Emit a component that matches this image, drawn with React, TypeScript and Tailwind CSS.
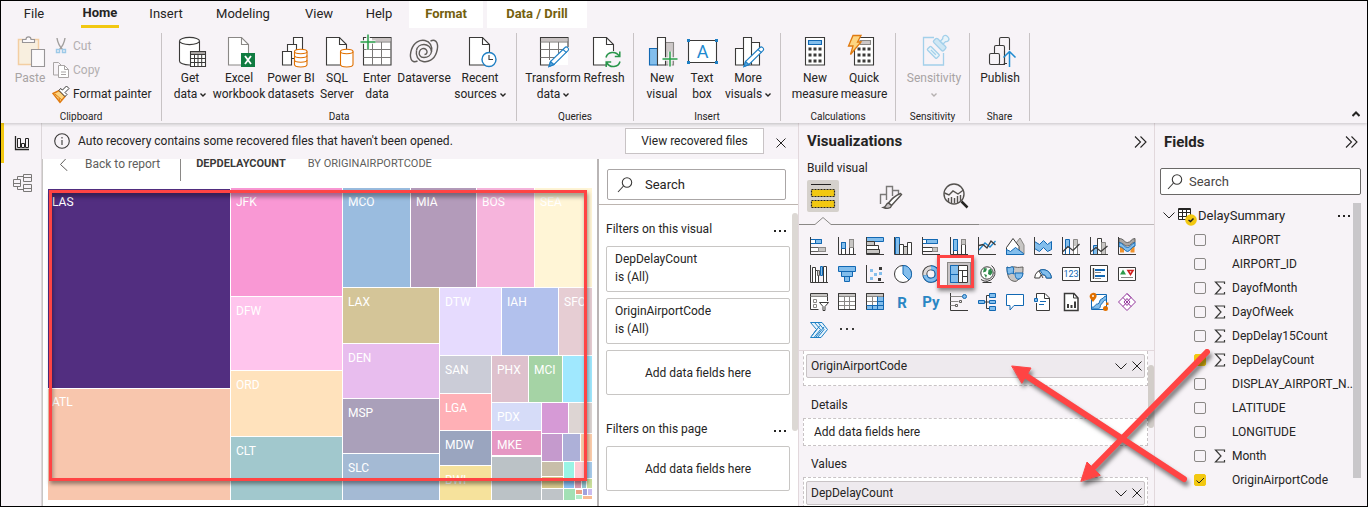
import React from "react";

type Kids = { children?: React.ReactNode };

const INK = "#3b3a39";
const BLUE = "#1268b3";
const SKY = "#83beec";
const GRAY = "#c8c6c4";

/* ---------- icon frames ---------- */

function Big({ children }: Kids) {
  return (
    <svg viewBox="0 0 32 32" className="h-8 w-8 shrink-0 overflow-visible" fill="none" stroke={INK} strokeWidth="1.1" aria-hidden="true">
      {children}
    </svg>
  );
}

function Small({ children }: Kids) {
  return (
    <svg viewBox="0 0 18 18" className="h-[18px] w-[18px] overflow-visible" fill="none" stroke={INK} strokeWidth="1" aria-hidden="true">
      {children}
    </svg>
  );
}

const Axis = () => <path d="M.5 0v17.500H18" />;

const Doc = ({ stroke = INK }: { stroke?: string }) => (
  <g stroke={stroke}>
    <path d="M5.500 2.500h13l7 7v20.500h-20z" fill="#fff" />
    <path d="M18.500 2.500v7h7" />
  </g>
);

const Cylinder = ({ rings = false }: { rings?: boolean }) => (
  <g stroke="#e07000">
    <path d="M19.500 16.500v13c0 1.500 3 2.500 6.200 2.500s6.300-1 6.300-2.500v-13" fill="#fff" />
    <ellipse cx="25.750" cy="16.500" rx="6.250" ry="2.200" fill="#fff" />
    {rings && <path d="M19.500 20.500c0 3 12.500 3 12.500 0M19.500 25c0 3 12.500 3 12.500 0" />}
  </g>
);

const Pencil = () => (
  <g stroke="#1e7fc4">
    <path d="M28 12.500c1.500-1.600 4.600 1 3.200 2.800L17 29.500 12 31.500 13.500 26.500z" fill="#fff" />
    <path d="M13.500 26.500 12 31.500 17 29.500z" fill="#5aa5dc" />
    <path d="M26 14.500l3.500 3.200" />
  </g>
);

const Plus = ({ x, y }: { x: number; y: number }) => (
  <g transform={`translate(${x} ${y})`}>
    <path d="M-7.500 0h15M0-7.500v15" stroke="#f7f3f7" strokeWidth="3.500" />
    <path d="M-7.500 0h15M0-7.500v15" stroke="#28a04a" strokeWidth="1.500" />
  </g>
);

/* ---------- ribbon icons ---------- */

const PasteIcon = () => (
  <Big>
    <g opacity=".5">
      <path d="M4.500 4.500h20v25h-20z" fill="#faecc9" stroke="#f0aa50" strokeWidth="1.500" />
      <path d="M8.500 7.500v-3h3.500c0-3.500 5-3.500 5 0h3.500v3z" fill="#fff" />
      <path d="M17.500 14.500h13v17h-13z" fill="#fff" />
    </g>
  </Big>
);
const GetDataIcon = () => (
  <Big>
    <path d="M5.500 6v20c0 2.300 4.500 4 10 4s10-1.700 10-4V6" fill="#fff" />
    <ellipse cx="15.500" cy="6" rx="10" ry="3.600" fill="#fff" />
    <path d="M16.500 16.500h15v15h-15z" fill="#fff" />
    <path d="M17 17h14v2H17z" fill="#a9a5a3" stroke="none" />
    <path d="M16.500 19.500h15M16.500 23.500h15M16.500 27.500h15M20.500 19.500v12M24 19.500v12M27.700 19.500v12" strokeWidth="1" />
  </Big>
);
const ExcelIcon = () => (
  <Big>
    <Doc stroke="#8a8886" />
    <path d="M18 18h14v14H18z" fill="#107c41" stroke="none" />
    <path d="M22 21l6 8M28 21l-6 8" stroke="#fff" strokeWidth="1.800" />
  </Big>
);
const DatasetsIcon = () => (
  <Big>
    <path d="M18.500 2.500h9v14h-9z" fill="#fff" />
    <path d="M12.500 9.500h9v14h-9z" fill="#fff" />
    <path d="M7.500 16.500h9v13.500h-9z" fill="#fff" />
    <Cylinder rings />
  </Big>
);
const SqlIcon = () => (
  <Big>
    <Doc />
    <Cylinder />
  </Big>
);
const EnterDataIcon = () => (
  <Big>
    <path d="M2.500 2.500h27.500v27.500H2.500z" fill="#fff" />
    <path d="M11 3h18.500v3.500H11z" fill="#c8c2c2" stroke="none" />
    <path d="M2.500 14.500h27.500M2.500 22.500h27.500M11.500 7v23M20.500 7v23M11 7h19" stroke="#7a7877" strokeWidth="1" />
    <Plus x={7} y={7} />
  </Big>
);
const DataverseIcon = () => (
  <Big>
    <g stroke="#605d5a" strokeWidth="1.400">
      <path d="M9.500 26C3 29 1 22 3.500 14.500 6 7 12 4.500 17 5.500c5 1 7.500 5.500 6.500 11" />
      <path d="M22.500 6C29 3 31 10 28.500 17.500 26 25 20 27.500 15 26.500c-5-1-7.500-5.500-6.500-11" />
      <path d="M8.500 15.500c.5-4 4-6 7.500-6s7 2.500 7.500 7c-.5 4-4 6-7.500 6-4 0-5.500-3-4.500-6s4.500-4 6.500-2 1 5-1.500 5" />
    </g>
  </Big>
);
const RecentIcon = () => (
  <Big>
    <Doc />
    <circle cx="25" cy="24.500" r="7" fill="#fff" stroke="#1e7fc4" strokeWidth="1.400" />
    <path d="M25 20v4.500h4" />
  </Big>
);
const TransformIcon = () => (
  <Big>
    <path d="M3.500 2.500h27.500v27.500H3.500z" fill="#fff" stroke="none" />
    <path d="M31 12V2.500H3.500v27.500H12" />
    <path d="M4 3h26.500v3.500H4z" fill="#c8c2c2" stroke="none" />
    <path d="M3.500 7h27.500M3.500 14.500H26M3.500 22.500H18M12.500 7v18M21.500 7v12" stroke="#7a7877" strokeWidth="1" />
    <Pencil />
  </Big>
);
const RefreshIcon = () => (
  <Big>
    <Doc />
    <circle cx="25" cy="24.500" r="8.500" fill="#f7f3f7" stroke="none" />
    <path d="M18 22.500c1.500-6 10-7 13.500-1M31.800 16.500v5h-5M32 26.500c-1.500 6-10 7-13.500 1M18.200 32v-5h5" stroke="#28964a" strokeWidth="1.500" />
  </Big>
);
const NewVisualIcon = () => (
  <Big>
    <path d="M3.500 13.500h8v16.500h-8z" fill={SKY} stroke={BLUE} />
    <path d="M19.500 7.500h8v22.500h-8z" fill="#cdc8c8" stroke="#8a8886" />
    <path d="M11.500 2.500h8v27.500h-8z" fill="#fff" />
    <Plus x={24} y={24} />
  </Big>
);
const TextBoxIcon = () => (
  <Big>
    <path d="M2.500 5.500h28v22h-28z" fill="#fff" />
    <path d="M1 4h3v3H1zM29 4h3v3h-3zM1 26h3v3H1zM29 26h3v3h-3z" fill="#1e7fc4" stroke="none" />
    <text x="16.500" y="23" textAnchor="middle" fontSize="18" fill="#1e8ad0" stroke="none">A</text>
  </Big>
);
const MoreVisualsIcon = () => (
  <Big>
    <path d="M3.500 13.500h8v16.500h-8zM19.500 7.500h8v22.500h-8zM11.500 2.500h8v27.500h-8z" fill="#fff" />
    <Pencil />
  </Big>
);
const Keys = () => (
  <path d="M9.500 12.500h3v3h-3zM14.500 12.500h3v3h-3zM19.500 12.500h3v3h-3zM9.500 18.500h3v3h-3zM14.500 18.500h3v3h-3zM19.500 18.500h3v3h-3zM9.500 24.500h3v3h-3zM14.500 24.500h3v3h-3zM19.500 24.500h3v3h-3z" fill={INK} stroke="none" />
);
const MeasureIcon = () => (
  <Big>
    <path d="M6.500 2.500h19v27.500h-19z" fill="#fff" />
    <path d="M9.500 5.500h13v4h-13z" fill={SKY} stroke={BLUE} />
    <Keys />
  </Big>
);
const QuickIcon = () => (
  <Big>
    <path d="M6.500 2.500h19v27.500h-19z" fill="#fff" />
    <path d="M12 5.500h10.500v4H12z" fill="#cdc8c8" stroke="#8a8886" />
    <Keys />
    <path d="M5 .5h8L9.500 7H13L2.500 19.500 5 11H.5z" fill="#fcd582" stroke="#e07a10" strokeWidth="1.300" />
  </Big>
);
const SensitivityIcon = () => (
  <Big>
    <g stroke="#a3d0ea" strokeWidth="1.300">
      <path d="M16 2.500H5.500v27.500h20V18" />
      <g transform="rotate(45 15 17)">
        <rect x="9" y="14.500" width="13" height="5" rx="1" fill="#e8f4fa" />
        <path d="M12 17h7" />
      </g>
      <g transform="rotate(45 24 8)">
        <rect x="16.500" y="8" width="14" height="5.500" rx="1.500" fill="#cfe7f4" />
        <path d="M21.500 8V4.500c-2-1.500-2-5 2-5s4 3.500 2 5V8z" fill="#e8f4fa" />
      </g>
    </g>
  </Big>
);
const PublishIcon = () => (
  <Big>
    <rect x="15.500" y="2.500" width="10" height="26" rx="1.500" fill="#f7f3f7" />
    <rect x="10.500" y="10.500" width="10" height="19" rx="1.500" fill="#f7f3f7" />
    <rect x="5.500" y="18.500" width="10" height="11" rx="1.500" fill="#f7f3f7" />
    <path d="M20.500 16v13.500h-5" />
    <path d="M25.500 15v17" stroke="#f7f3f7" strokeWidth="5" />
    <path d="M25.500 32V17M19.500 22.500l6-6 6 6" stroke="#1e8ad0" strokeWidth="1.500" />
  </Big>
);

const CutIcon = () => (
  <Small>
    <path d="M5 1c.5 4 2 8 6 12M13 1c-.5 4-2 8-6 12" stroke="#a19f9d" strokeWidth="1.400" />
    <path d="M4.500 12.500h3v3h-3zM10.500 12.500h3v3h-3z" stroke="#9cc9e8" strokeWidth="1.400" />
  </Small>
);
const CopyIcon = () => (
  <Small>
    <g stroke="#a9a5a5">
      <path d="M6 14H1.500V1.500h5L9 4" />
      <path d="M6.500 4.500h6l4 4v8h-10z" fill="#fff" />
      <path d="M12.500 4.500v4h4M9 11h5M9 13.500h5" />
    </g>
  </Small>
);
const PainterIcon = () => (
  <Small>
    <path d="M1 8.500l6-3 6 6-5 6z" fill="#fcd582" stroke="#e07a10" strokeWidth="1.400" />
    <path d="M3 9l7 6M8 17l-1-4" stroke="#e07a10" />
    <path d="M7 5.500l6 6 2-2-2-2 4-4-2.500-2.500-4 4-2-1.500z" fill="#fff" />
  </Small>
);

/* ---------- visual gallery icons ---------- */

const gallery: { name: string; icon: React.ReactNode }[] = [
  { name: "Stacked bar chart", icon: <><path d="M.5 2.500h11v4H.5z" fill="#fff" stroke={BLUE} /><path d="M5.500 2.500h6v4h-6z" fill={SKY} stroke={BLUE} /><path d="M.5 10.500h15v4H.5z" fill="#fff" stroke="#605e5c" /><path d="M8.500 10.500h7v4h-7z" fill={GRAY} stroke="#8a8886" /><Axis /></> },
  { name: "Stacked column chart", icon: <><path d="M3.500 5.500h4v12h-4z" fill="#fff" /><path d="M3.500 5.500h4v6h-4z" fill={SKY} stroke={BLUE} /><path d="M11.500 2.500h4v15h-4z" fill="#fff" /><path d="M11.500 2.500h4v8h-4z" fill={GRAY} stroke="#8a8886" /><Axis /></> },
  { name: "Clustered bar chart", icon: <><path d="M.5.500h17v4H.5z" fill={SKY} stroke={BLUE} /><path d="M.5 4.500h8v4h-8z" fill={GRAY} /><path d="M.5 8.500h12v4H.5z" fill="#fff" /><path d="M.5 12.500h13v4H.5z" fill={GRAY} /><Axis /></> },
  { name: "Clustered column chart", icon: <><path d="M1.500.500h4v17h-4z" fill={SKY} stroke={BLUE} /><path d="M5.500 7.500h4v10h-4z" fill="#fff" /><path d="M9.500 9.500h4v8h-4z" fill={GRAY} /><path d="M13.500 5.500h4v12h-4z" fill="#fff" /><Axis /></> },
  { name: "100% stacked bar chart", icon: <><path d="M.5 2.500h15v4H.5z" fill="#fff" stroke={BLUE} /><path d="M4.500 2.500h11v4h-11z" fill={SKY} stroke={BLUE} /><path d="M.5 10.500h15v4H.5z" fill="#fff" /><path d="M10.500 10.500h5v4h-5z" fill={GRAY} stroke="#8a8886" /><Axis /></> },
  { name: "100% stacked column chart", icon: <><path d="M3.500 2.500h4v15h-4z" fill="#fff" /><path d="M3.500 2.500h4v11h-4z" fill={SKY} stroke={BLUE} /><path d="M11.500 2.500h4v15h-4z" fill="#fff" /><path d="M11.500 2.500h4v5h-4z" fill={GRAY} stroke="#8a8886" /><Axis /></> },
  { name: "Line chart", icon: <><path d="M1 13l6-7 5 4 5.500-6" stroke="#1e8ad0" strokeWidth="1.300" /><path d="M1 8.500l4-1 4 3.500 4-7 4.500 4" strokeWidth="1.300" /><Axis /></> },
  { name: "Area chart", icon: <><path d="M8.500 8L14 1l4 7v9.500H8.500z" fill={GRAY} stroke="#8a8886" /><path d="M.5 10.500L7 1.500l6 8v8H.5z" fill="#fff" /><path d="M.5 17.500v-5l4 2 5-4 8 6v1z" fill={SKY} stroke={BLUE} /></> },
  { name: "Stacked area chart", icon: <><path d="M.5 4.500l5 3 4-4 4 4 4-3v8l-4 2-4-4-4 4-5-3z" fill={SKY} stroke={BLUE} /><Axis /></> },
  { name: "Line and stacked column chart", icon: <><path d="M3.500 2.500h4v15h-4z" fill={SKY} stroke={BLUE} /><path d="M11.500 2.500h4v15h-4z" fill={GRAY} stroke="#8a8886" /><path d="M4 11h3v6H4zM12 9h3v8h-3z" fill="#fff" stroke="none" /><path d="M1 14.500l5-5 5 4 6.500-6.500" strokeWidth="1.300" /><Axis /></> },
  { name: "Line and clustered column chart", icon: <><path d="M3.500 8.500h4v9h-4z" fill={SKY} stroke={BLUE} /><path d="M7.500 1.500h4v16h-4z" fill="#fff" /><path d="M11.500 5.500h4v12h-4z" fill={GRAY} stroke="#8a8886" /><path d="M1 14.500l5-4 5 4 6.500-5.500" strokeWidth="1.300" /><Axis /></> },
  { name: "Ribbon chart", icon: <><path d="M1 1.500c5 0 5 4 8.500 4S13 1.500 17 1.500v4c-4 0-4 3.500-7.500 3.500S6 6 1 6z" fill="#aaa7a5" stroke="#605e5c" /><path d="M2 8.500h4v7H2zM12.500 8.500h4v7h-4z" fill="#f0922c" stroke="none" /><path d="M1 5.500c4 0 5 5 8.500 5S13 6.500 17 5.500v3.500c-4 1-5 5.500-7.500 5.500S5 9.500 1 9.500z" fill={SKY} stroke={BLUE} /><Axis /></> },
  { name: "Waterfall chart", icon: <><path d="M2.500 2.500h3v15h-3z" fill="#fff" /><path d="M5.500 5.500h3v12h-3z" fill="#fff" /><path d="M7.500 5.500h2v5h-2z" fill={GRAY} stroke="#605e5c" /><path d="M10.500 1.500h2v9h-2z" fill={SKY} stroke={BLUE} /><path d="M13.500 1.500h3v16h-3z" fill="#fff" /><Axis /></> },
  { name: "Funnel chart", icon: <g fill={SKY} stroke={BLUE}><path d="M.5 1.500h17v5H.5zM3.500 6.500h11v5h-11zM6.500 11.500h5v5h-5z" /></g> },
  { name: "Scatter chart", icon: <><path d="M4 4h3v3H4zM8 8h3v3H8zM13 7h3v3h-3zM4 12h3v3H4z" fill={SKY} stroke="none" /><path d="M13 2h3v3h-3zM12 13h3v3h-3z" fill={INK} stroke="none" /><Axis /></> },
  { name: "Pie chart", icon: <><circle cx="9" cy="9" r="8.500" fill="#fff" /><path d="M9 .5A8.500 8.500 0 0 1 15 15L9 9z" fill={SKY} stroke={BLUE} /></> },
  { name: "Donut chart", icon: <><circle cx="9" cy="9" r="6.200" stroke={INK} strokeWidth="5" /><circle cx="9" cy="9" r="6.200" stroke="#dedada" strokeWidth="3.200" /><path d="M9 2.800a6.200 6.200 0 1 1-6 7.500" stroke={BLUE} strokeWidth="5" /><path d="M9 2.800a6.200 6.200 0 1 1-6 7.500" stroke={SKY} strokeWidth="3.200" /></> },
  { name: "Treemap", icon: <><path d="M.5.500h17v17H.5z" fill="#fff" /><path d="M.5.500h8v9h-8zM.5 9.500h8v8h-8z" fill={SKY} stroke={BLUE} /><path d="M8.500 5.500h9M12.500 5.500v12M12.500 11.500h5M8.500.500v17" /></> },
  { name: "Map", icon: <><circle cx="9" cy="8" r="6.200" fill="#fff" /><path d="M6 3l3 .500-1 3-3 1zM10.500 5l2.500-1.500 1.500 4-2 3-2.500-1.500zM6 9l3 1-1 3z" fill="#2d8a4a" stroke="none" /><path d="M13.500.500A8.300 8.300 0 1 1 3 14.500M9 16v1.500M4.500 17.500h9" /></> },
  { name: "Filled map", icon: <><path d="M1 2c3 2 4-1 8 0s5 0 8 0c0 5 0 10-4 12-2 2-3 3-6 2-4-1-6-5-6-14z" fill={GRAY} stroke="#605e5c" /><path d="M1 2c3 2 4-1 6 0 2 3-1 4 1 7-3-2-4 1-6 0-1-2-1-4-1-7zM9 8h8c0 3-2 6-4 6-3 1-4-3-4-6z" fill={SKY} stroke={BLUE} /></> },
  { name: "Gauge", icon: <><path d="M.7 13a8.300 8.300 0 0 1 16.600 0h-5a3.300 3.300 0 0 0-6.600 0z" fill="#fff" /><path d="M6 5.200A8.300 8.300 0 0 1 17.300 13h-5c0-2-1.500-3.500-3.500-3.300z" fill={SKY} stroke={BLUE} /><path d="M9 13L5 6" /></> },
  { name: "Card", icon: <><path d="M.5 2.500h17v13H.5z" fill="#fff" /><text x="9" y="12" fontSize="9" textAnchor="middle" fill={BLUE} stroke="none">123</text></> },
  { name: "Multi-row card", icon: <><path d="M.5.500h17v16H.5z" fill="#fff" /><path d="M3.500 3v11" strokeWidth="1.400" /><path d="M5 5h10M5 11h10" stroke={BLUE} strokeWidth="2" /><path d="M5 7.500h6M5 13.500h6" stroke="#8a8886" /></> },
  { name: "KPI", icon: <><path d="M.5 2.500h17v13H.5z" fill="#fff" /><path d="M2 9.500l3-5 3 5z" fill="#2d9a4a" stroke="none" /><path d="M10 5.500h5l-2.500 4z" fill="#fff" stroke="#d02020" strokeWidth="1.600" /><path d="M3 12.500h12" stroke="#8a8886" /></> },
  { name: "Slicer", icon: <><path d="M17.500 8V.5H.5v16h8" fill="#fff" /><path d="M1 1h16v2.500H1z" fill={GRAY} stroke="none" /><path d="M.5 3.500h17M3.500 6.500h3v3h-3zM3.500 11.500h3v3h-3z" stroke="#8a8886" /><path d="M9.500 9.500h9l-3.500 4v4h-2v-4z" fill="#fff" /></> },
  { name: "Table", icon: <><path d="M.5.500h17v16H.5z" fill="#fff" /><path d="M1 1h16v2.500H1z" fill={GRAY} stroke="none" /><path d="M.5 3.500h17M.5 8.500h17M.5 12.500h17M6.500 3.500v13M11.500 3.500v13" stroke="#8a8886" /><path d="M.5.500h17v16H.5z" /></> },
  { name: "Matrix", icon: <><path d="M.5.500h17v16H.5z" fill="#fff" /><path d="M1 1h16v2.500H1z" fill={GRAY} stroke="none" /><path d="M12 4h5.500v12.500H1V12h11z" fill={SKY} stroke="none" /><path d="M.5 3.500h17M.5 8.500h11M6.500 3.500v9" stroke="#8a8886" /><path d="M11.500 3.500v13M.5 12.500h17M6.500 12.500v4M11.500 8.500h6M17.500 4v12.500H.5" stroke={BLUE} /><path d="M.5 12V.5h17V4" /></> },
  { name: "R script visual", icon: <text x="8" y="15" fontSize="15" fontWeight="700" textAnchor="middle" fill="#2a86c4" stroke="none">R</text> },
  { name: "Python visual", icon: <text x="9" y="14" fontSize="15" fontWeight="700" textAnchor="middle" fill="#2a86c4" stroke="none">Py</text> },
  { name: "Key influencers", icon: <><Axis /><path d="M.5 3.500h12M.5 8.500h8M.5 12.500h5" stroke="#8a8886" /><circle cx="14.500" cy="3.500" r="2" fill={SKY} stroke={BLUE} /><path d="M9.500 7.500h2v2h-2zM5.500 11.500h2v2h-2z" stroke="#605e5c" /></> },
  { name: "Decomposition tree", icon: <><path d="M7 9h5M8.500 2.500v13M8.500 2.500h3M8.500 15.500h3" /><path d="M.5 7.500h6v3h-6zM11.500.500h6v4h-6zM11.500 7.500h6v3h-6zM11.500 13.500h6v4h-6z" fill={SKY} stroke={BLUE} /></> },
  { name: "Q&A", icon: <path d="M.5 1.500h17v11H8l-4 4.500v-4.500H.5z" fill="#fff" stroke={BLUE} /> },
  { name: "Smart narrative", icon: <><path d="M2.500 5V.5H11l4.500 4.500v12.500h-13V10" fill="#fff" /><path d="M10.500.500v5h5" /><path d="M.5 5.500h3v3h-3z" fill={SKY} stroke={BLUE} /><path d="M6 8.500h6M5 11.500h5" stroke={BLUE} /></> },
  { name: "Paginated report", icon: <><path d="M2.500.500H12l4 4.500v12.500H2.500z" fill="#fff" strokeWidth="1.500" /><path d="M11.500.500v4.500H16" /><path d="M5 11h2v4H5zM8.500 12h2v3h-2zM12 8.500h2V15h-2z" fill={INK} stroke="none" /></> },
  { name: "ArcGIS map", icon: <><path d="M1.500 1.500h15v15h-15z" fill="#fff" stroke={BLUE} /><path d="M1.500 14c4 1 3-3 6-3s1-4 4-5 2-3 5-3v4c-4 0-3 3-5 4s0 3-3 5h-7z" fill={SKY} stroke={BLUE} /><path d="M2.500 0c4-1 5 3 3.500 5L3 9 0 5C-1 3 0 .5 2.500 0z" fill="#e07000" stroke="none" /><circle cx="3" cy="3" r="1" fill="#fff" stroke="none" /><circle cx="15.500" cy="15.500" r="2.500" fill="#e07000" stroke="none" /><path d="M16 9.500h2.500V12H16z" fill="#e07000" stroke="none" /></> },
  { name: "Power Apps", icon: <g stroke="#94369c"><path d="M9 .5L.5 9 9 17.500 17.500 9z" fill="#fff" /><path d="M5 4.500L9 9l-4 4.500M13 4.500L9 9l4 4.500M9 .5L13 4.500M9 5.500l3 3.500-3 3.500L6 9z" /></g> },
  { name: "Power Automate", icon: <g stroke="#1e7fc4"><path d="M.5 1.500H12l5.500 7-6.500 8H.5l6-8z" fill="#e7f3fc" /><path d="M4.500 1.500l6 7-6.500 8M8 1.500l6 7-6.500 8M2 14.500l8-10M6 16l8-10" /></g> },
  { name: "More visuals", icon: <path d="M2 7h2v2H2zM8 7h2v2H8zM14 7h2v2h-2z" fill={INK} stroke="none" /> },
];

/* ---------- small shared glyphs ---------- */

const SearchGlyph = () => (
  <svg viewBox="0 0 16 16" className="h-4 w-4 shrink-0" fill="none" stroke="#3b3a39" strokeWidth="1.100" aria-hidden="true">
    <circle cx="10" cy="5.500" r="4.700" />
    <path d="M6.500 9L1 15" />
  </svg>
);
const Cross = () => (
  <svg viewBox="0 0 10 10" className="h-[10px] w-[10px]" fill="none" stroke="#252423" aria-hidden="true">
    <path d="M.5.500l9 9M9.500.500l-9 9" />
  </svg>
);
const Down = () => (
  <svg viewBox="0 0 12 7" className="h-[7px] w-3" fill="none" stroke="#252423" aria-hidden="true">
    <path d="M.5.500L6 6 11.500.500" />
  </svg>
);
const MenuCaret = ({ faded }: { faded?: boolean }) => (
  <svg viewBox="0 0 6 4" className="inline-block h-1 w-[6px] align-middle" fill="none" stroke={faded ? "#b5b0b0" : "#252423"} strokeWidth="1.400" aria-hidden="true">
    <path d="M.5.500L3 3 5.500.500" />
  </svg>
);
const Collapse = () => (
  <svg viewBox="0 0 13 12" className="h-3 w-[13px]" fill="none" stroke="#252423" strokeWidth="1.100" aria-hidden="true">
    <path d="M1 .5L6.500 6 1 11.500M6.500.500L12 6 6.500 11.500" />
  </svg>
);
const Dots = () => (
  <svg viewBox="0 0 12 2" className="h-[2px] w-3" fill="#252423" aria-hidden="true">
    <path d="M0 0h2v2H0zM5 0h2v2H5zM10 0h2v2h-2z" />
  </svg>
);

/* ---------- ribbon ---------- */

type ToolProps = { icon: React.ReactNode; lines: string[]; w: string; caret?: boolean; faded?: boolean };

function Tool({ icon, lines, w, caret, faded }: ToolProps) {
  return (
    <button type="button" disabled={faded} className={`flex ${w} shrink-0 flex-col items-center gap-[3px] leading-4 whitespace-nowrap ${faded ? "text-[#a8a3a4]" : ""}`}>
      {icon}
      <span className="block text-center">
        {lines.map((line, i) => (
          <span key={i} className="block">
            {line}
            {caret && i === lines.length - 1 && <> <MenuCaret faded={faded} /></>}
          </span>
        ))}
      </span>
    </button>
  );
}

function Group({ label, pad, children }: Kids & { label: string; pad: string }) {
  return (
    <>
      <section aria-label={label} className="flex flex-col">
        <div className={`flex flex-1 items-start pt-[7px] ${pad}`}>{children}</div>
        <div className="h-3 text-center text-[10px] leading-3">{label}</div>
      </section>
      <div className="mt-[5px] mb-[2px] w-px bg-[#c8c3c5]" />
    </>
  );
}

function Ribbon() {
  const tab = "h-[27px] pb-[2px] leading-[24px]";
  return (
    <header className="relative z-10 bg-[#f7f3f7] shadow-[0_1px_3px_rgba(0,0,0,0.2)]">
      <nav className="flex h-[27px] pl-[22px] text-[13px]">
        <button type="button" className={`${tab} w-[22px]`}>File</button>
        <button type="button" className="ml-9 h-[27px] w-[38px] border-b-[3px] border-[#f2c811] text-[13px] leading-[24px] font-bold">Home</button>
        <button type="button" className={`${tab} ml-7 w-[38px]`}>Insert</button>
        <button type="button" className={`${tab} ml-7 w-[60px]`}>Modeling</button>
        <button type="button" className={`${tab} ml-[30px] w-8`}>View</button>
        <button type="button" className={`${tab} ml-7 w-8`}>Help</button>
        <button type="button" className={`${tab} ml-[14px] w-[74px] bg-white font-bold text-[#74600e]`}>Format</button>
        <button type="button" className={`${tab} ml-1 w-[100px] bg-white font-bold text-[#74600e]`}>Data / Drill</button>
      </nav>
      <div className="flex h-[95px]">
        <Group label="Clipboard" pad="pl-[7px] pr-[9px]">
          <Tool icon={<PasteIcon />} lines={["Paste"]} w="w-11" faded />
          <div className="-mt-px flex w-[100px] flex-col whitespace-nowrap">
            <button type="button" disabled className="flex h-6 items-center gap-[3px] text-[#b3afb0]"><CutIcon />Cut</button>
            <button type="button" disabled className="flex h-6 items-center gap-[3px] text-[#b3afb0]"><CopyIcon />Copy</button>
            <button type="button" className="flex h-6 items-center gap-[3px]"><PainterIcon />Format painter</button>
          </div>
        </Group>
        <Group label="Data" pad="pl-1 pr-[6px]">
          <Tool icon={<GetDataIcon />} lines={["Get", "data"]} w="w-12" caret />
          <Tool icon={<ExcelIcon />} lines={["Excel", "workbook"]} w="w-[50px]" />
          <Tool icon={<DatasetsIcon />} lines={["Power BI", "datasets"]} w="w-[54px]" />
          <Tool icon={<SqlIcon />} lines={["SQL", "Server"]} w="w-[38px]" />
          <Tool icon={<EnterDataIcon />} lines={["Enter", "data"]} w="w-[42px]" />
          <Tool icon={<DataverseIcon />} lines={["Dataverse"]} w="w-[52px]" />
          <Tool icon={<RecentIcon />} lines={["Recent", "sources"]} w="w-[60px]" caret />
        </Group>
        <Group label="Queries" pad="pl-[6px] pr-2">
          <Tool icon={<TransformIcon />} lines={["Transform", "data"]} w="w-[60px]" caret />
          <Tool icon={<RefreshIcon />} lines={["Refresh"]} w="w-[42px]" />
        </Group>
        <Group label="Insert" pad="pl-2 pr-[6px]">
          <Tool icon={<NewVisualIcon />} lines={["New", "visual"]} w="w-10" />
          <Tool icon={<TextBoxIcon />} lines={["Text", "box"]} w="w-10" />
          <Tool icon={<MoreVisualsIcon />} lines={["More", "visuals"]} w="w-[52px]" caret />
        </Group>
        <Group label="Calculations" pad="pl-[10px] pr-[6px]">
          <Tool icon={<MeasureIcon />} lines={["New", "measure"]} w="w-12" />
          <Tool icon={<QuickIcon />} lines={["Quick", "measure"]} w="w-[50px]" />
        </Group>
        <Group label="Sensitivity" pad="pl-2 pr-[5px]">
          <Tool icon={<SensitivityIcon />} lines={["Sensitivity", ""]} w="w-[60px]" caret faded />
        </Group>
        <Group label="Share" pad="pl-[6px] pr-[5px]">
          <Tool icon={<PublishIcon />} lines={["Publish"]} w="w-12" />
        </Group>
        <button type="button" aria-label="Collapse ribbon" className="mr-[7px] mb-[6px] ml-auto self-end">
          <svg viewBox="0 0 8 6" className="h-[6px] w-2" fill="none" stroke="#252423" strokeWidth="2" aria-hidden="true"><path d="M.5 5L4 1.500 7.500 5" /></svg>
        </button>
      </div>
    </header>
  );
}

/* ---------- treemap ---------- */

type Tile = [number, number, number, number, string, string?];

const tiles: Tile[] = [
  [1, 1, 182, 199, "#522e80", "LAS"], [1, 201, 182, 111, "#f8c6ad", "ATL"],
  [184, 0, 111, 108, "#f998d4", "JFK"], [184, 109, 111, 73, "#ffc5ed", "DFW"], [184, 183, 111, 65, "#ffe2bc", "ORD"], [184, 249, 111, 63, "#a1c8cd", "CLT"],
  [296, 0, 67, 99, "#9abcdf", "MCO"], [364, 0, 65, 99, "#b39bba", "MIA"], [430, 0, 57, 99, "#f6b4dc", "BOS"], [488, 0, 57, 99, "#fff5d6", "SEA"],
  [296, 100, 96, 55, "#d4c598", "LAX"], [296, 156, 96, 54, "#e8bdee", "DEN"], [296, 211, 96, 54, "#aaa0ba", "MSP"], [296, 266, 96, 46, "#a4bad4", "SLC"],
  [393, 100, 61, 67, "#e6dbfe", "DTW"], [455, 100, 56, 67, "#b2c1ed", "IAH"], [512, 100, 33, 67, "#e6cdd3", "SFO"],
  [393, 168, 51, 37, "#cbccd7", "SAN"], [393, 206, 51, 36, "#ffb0b6", "LGA"], [393, 243, 51, 34, "#9aa5bf", "MDW"], [393, 278, 51, 34, "#f6e29c", "BWI"],
  [445, 168, 36, 46, "#dec1cd", "PHX"], [482, 168, 33, 46, "#a5d3a5", "MCI"], [516, 168, 29, 46, "#a0e8fe"],
  [445, 215, 49, 27, "#d6dcf8", "PDX"], [445, 243, 49, 24, "#e698c4", "MKE"], [445, 269, 49, 43, "#bbc2c6"],
  [495, 215, 26, 30, "#d69ad6"], [522, 215, 23, 30, "#ddd5d3"],
  [495, 246, 20, 27, "#c59acd"], [516, 246, 17, 27, "#adb0d8"], [534, 246, 11, 27, "#fdceac"],
  [495, 274, 21, 14, "#c8bea9"], [517, 274, 10, 16, "#9af4e5"], [528, 274, 9, 16, "#ffccd3"], [538, 274, 7, 16, "#a9ccec"],
  [495, 289, 21, 11, "#d8c88c"], [517, 291, 10, 9, "#8cc2f6"], [528, 291, 6, 9, "#dc9cb0"], [535, 291, 4, 9, "#94c8d4"], [540, 291, 5, 9, "#cadf9c"],
  [495, 301, 21, 11, "#bfc4c8"], [517, 301, 11, 11, "#a3e0b5"], [529, 302, 6, 4, "#eea284"], [529, 307, 6, 4, "#b2edc9"], [536, 301, 4, 6, "#a0a2dd"], [541, 301, 4, 6, "#cbbcee"], [536, 308, 9, 3, "#f9bb95"],
];

function Treemap() {
  return (
    <div className="relative">
      <svg viewBox="0 0 545 312" className="block h-auto w-full" role="img" aria-label="DepDelayCount by OriginAirportCode">
        {tiles.map(([x, y, w, h, fill, name]) => (
          <g key={`${x}-${y}`}>
            <rect x={x} y={y} width={w} height={h} fill={fill} />
            {name && (
              <svg x={x} y={y} width={w} height={h}>
                <text x={x === 1 ? 4 : 5} y={x === 1 ? 17 : 18} fontSize="12" fill="#fff">{name}</text>
              </svg>
            )}
          </g>
        ))}
      </svg>
      <div className="absolute top-[2px] right-[5px] bottom-[19px] left-[2px] border-[3px] border-[#ff4444] shadow-[1px_3px_4px_rgba(0,0,0,0.4),inset_1px_4px_4px_rgba(0,0,0,0.35)]" />
    </div>
  );
}

/* ---------- main areas ---------- */

function Rail() {
  return (
    <nav aria-label="Views" className="flex w-[41px] shrink-0 flex-col border-r border-[#dcd6d9]">
      <button type="button" aria-label="Report view" className="flex h-10 items-center border-l-[3px] border-[#f2c811] pl-[10px]">
        <svg viewBox="0 0 16 16" className="h-4 w-4" fill="none" stroke="#252423" strokeWidth="1" aria-hidden="true"><path d="M1.500 1v13.500H15" strokeWidth="1.300" /><path d="M3.500 3.500h3v9h-3zM7.500 8.500h3v4h-3zM11.500 3.500h3v9h-3z" /></svg>
      </button>
      <button type="button" aria-label="Model view" className="flex h-10 items-center pl-3">
        <svg viewBox="0 0 19 19" className="h-[19px] w-[19px]" fill="none" stroke="#7a7877" strokeWidth="1" aria-hidden="true"><path d="M.5 5.500h7v7h-7zM.5 9.500h7M10.500.500h8v7h-8zM10.500 3.500h8M10.500 10.500h8v7h-8zM10.500 14.500h8M4.500 5.500V2.500h6M4.500 12.500v3h6" /></svg>
      </button>
    </nav>
  );
}

function Banner() {
  return (
    <div role="status" className="mt-1 flex h-8 shrink-0 items-center bg-[#f7f3f7] pr-[11px] pl-3">
      <svg viewBox="0 0 16 16" className="-mt-1 mr-2 h-4 w-4" fill="none" stroke="#3b3a39" strokeWidth="1.100" aria-hidden="true"><circle cx="8" cy="8" r="7.300" /><path d="M8 7v5M8 4v1.500" /></svg>
      <p className="-mt-1 whitespace-nowrap">Auto recovery contains some recovered files that haven't been opened.</p>
      <button type="button" className="-mt-1 ml-auto h-[26px] w-[139px] border border-[#c8c3c5] bg-white">View recovered files</button>
      <button type="button" aria-label="Dismiss" className="-mt-px ml-[11px] p-px"><Cross /></button>
    </div>
  );
}

function Canvas() {
  return (
    <section className="flex min-w-0 flex-1 flex-col border-l border-[#c8c6c4] bg-white pr-[5px] pl-1">
      <div className="flex h-[22px] items-start overflow-hidden whitespace-nowrap text-[#605e5c]">
        <button type="button" className="-mt-[3px] flex items-center leading-4">
          <svg viewBox="0 0 10 14" className="mr-4 ml-3 h-[14px] w-[10px]" fill="none" stroke="#605e5c" aria-hidden="true"><path d="M8 .5L1.500 7.500 8.500 14" /></svg>
          Back to report
        </button>
        <div className="ml-5 h-[22px] w-px bg-[#8a8886]" />
        <h2 className="-mt-[3px] ml-[15px] text-[11px] leading-4 font-bold text-[#3b3a39]">DEPDELAYCOUNT</h2>
        <p className="-mt-[3px] ml-[22px] text-[11px] leading-4">BY ORIGINAIRPORTCODE</p>
      </div>
      <div className="pt-[7px]"><Treemap /></div>
    </section>
  );
}

const FilterCard = ({ name }: { name: string }) => (
  <div className="mb-[6px] h-[46px] rounded-[2px] border border-[#c8c6c4] px-2 pt-[3px] leading-[18px]">
    <div>{name}</div>
    <div>is (All)</div>
  </div>
);
const DropCard = () => (
  <div className="flex h-[45px] items-center justify-center rounded-[2px] border border-[#c8c6c4]">Add data fields here</div>
);
const FilterHead = ({ title }: { title: string }) => (
  <div className="flex h-[34px] items-center justify-between pr-1">
    <h3>{title}</h3>
    <button type="button" aria-label={`${title} options`} className="mt-1"><Dots /></button>
  </div>
);

function Filters() {
  return (
    <aside aria-label="Filters" className="flex w-[201px] shrink-0 flex-col border-l-2 border-[#b9b5b5] bg-white">
      <div className="border-b border-[#bdb5b0] px-2 pt-[10px] pr-3 pb-1">
        <label className="flex h-[31px] items-center gap-3 rounded-[2px] border border-[#aaa6a6] pl-[9px]">
          <SearchGlyph />
          <input type="search" aria-label="Search filters" placeholder="Search" className="w-full min-w-0 text-[13px] outline-none placeholder:text-[#252423]" />
        </label>
      </div>
      <div className="flex min-h-0 flex-1">
        <div className="min-w-0 flex-1 overflow-hidden pt-[7px] pr-[2px] pl-[7px]">
          <FilterHead title="Filters on this visual" />
          <FilterCard name="DepDelayCount" />
          <FilterCard name="OriginAirportCode" />
          <DropCard />
          <div className="h-[17px]" />
          <FilterHead title="Filters on this page" />
          <DropCard />
        </div>
        <div className="mt-2 h-[218px] w-[6px] rounded-[3px] bg-[#dcd8d4]" />
      </div>
    </aside>
  );
}

const Chip = ({ name }: { name: string }) => (
  <div className="flex h-6 items-center rounded-[2px] border border-[#c8c3c5] bg-[#eeeaee] pr-[2px] pl-1">
    <span className="flex-1">{name}</span>
    <button type="button" aria-label={`${name} menu`} className="mr-[5px]"><Down /></button>
    <button type="button" aria-label={`Remove ${name}`}><Cross /></button>
  </div>
);

function Visualizations() {
  return (
    <aside aria-label="Visualizations" className="flex w-[357px] shrink-0 flex-col overflow-hidden border-r border-l border-[#e2d8dc]">
      <div className="flex h-[37px] items-center justify-between pr-[7px] pl-2">
        <h2 className="text-[15px] font-bold">Visualizations</h2>
        <button type="button" aria-label="Collapse visualizations"><Collapse /></button>
      </div>
      <h3 className="h-5 pl-2 leading-4">Build visual</h3>
      <div className="flex h-8 gap-[33px] pl-2">
        <button type="button" aria-label="Build visual" className="h-8 w-8 rounded-[2px] bg-[#d5d1cc]">
          <svg viewBox="0 0 32 32" className="h-8 w-8" fill="#f2c811" stroke="#252423" aria-hidden="true"><path d="M4 4.500h20" /><path d="M4.500 9.500h23v7h-23zM4.500 20.500h23v7h-23z" strokeDasharray="2 1" strokeWidth="1.200" /></svg>
        </button>
        <button type="button" aria-label="Format visual" className="h-8 w-8">
          <svg viewBox="0 0 32 32" className="h-8 w-8" fill="none" stroke="#55524f" strokeWidth="1.400" aria-hidden="true"><path d="M8.500 24V14.500h6V6.500h6V16M14.500 14.500V20M20.500 10.500h6v4" stroke="#7a7877" /><path d="M28.500 13.500l1 1L19.500 25.500l-3-2.500c3-4 7-7.500 12-9.500z" fill="#fff" /><path d="M16.500 23c-3 .5-2 4-5 4.500 3.500 1.500 7.500 1 8-2z" fill="#c8c3c5" /></svg>
        </button>
        <button type="button" aria-label="Analytics" className="h-8 w-8">
          <svg viewBox="0 0 32 32" className="h-8 w-8" fill="none" stroke="#55524f" strokeWidth="1.400" aria-hidden="true"><circle cx="17" cy="14" r="10" /><path d="M7.500 13l4.500 2 4-4 5 3 5.500-4" /><path d="M11.500 22v-4M14.500 23v-6M17.500 23v-5M20.500 23v-7M23.500 21v-6" /><path d="M24.500 21.500l6 6" stroke="#252423" strokeWidth="2.500" /></svg>
        </button>
      </div>
      <div className="flex h-[13px] items-end">
        <div className="h-px w-4 bg-[#8a8886]" />
        <svg viewBox="0 0 16 8" className="h-2 w-4" fill="none" stroke="#8a8886" aria-hidden="true"><path d="M0 7.500L8 .5l8 7" /></svg>
        <div className="h-px w-[148px] bg-[#8a8886]" />
        <div className="h-px flex-1 bg-[#bdb8b9]" />
      </div>
      <div className="grid h-[126px] grid-cols-[repeat(12,28px)] content-start border-b border-[#e2d8dc] pt-[7px] pl-[6px]">
        {gallery.map(({ name, icon }) =>
          name === "Treemap" ? (
            <button key={name} type="button" aria-label={name} aria-pressed="true" className="relative flex h-7 w-7 items-center justify-center">
              <span className="flex h-6 w-6 items-center justify-center border border-[#8a8886] bg-[#c8c3c5]"><Small>{icon}</Small></span>
              <span className="absolute -top-[5px] -right-px bottom-0 -left-2 border-[3px] border-[#ff4444] shadow-[1px_3px_4px_rgba(0,0,0,0.45)]" />
            </button>
          ) : (
            <button key={name} type="button" aria-label={name} className="flex h-7 w-7 items-center justify-center"><Small>{icon}</Small></button>
          ),
        )}
      </div>
      <div className="flex min-h-0 flex-1">
        <div className="min-w-0 flex-1 overflow-hidden pl-1">
          <div className="h-[35px] border border-t-0 border-dashed border-[#c8c3c5] bg-white px-[2px] pt-[3px]"><Chip name="OriginAirportCode" /></div>
          <h4 className="h-8 pt-[9px] pl-2 leading-5">Details</h4>
          <div className="h-[28px] border border-dashed border-[#c8c3c5] bg-white pl-[10px] leading-[26px]">Add data fields here</div>
          <h4 className="h-[31px] pt-2 pl-2 leading-5">Values</h4>
          <div className="h-9 border border-dashed border-[#c8c3c5] bg-white px-[2px] pt-[3px]"><Chip name="DepDelayCount" /></div>
        </div>
        <div className="mt-[14px] h-[63px] w-[6px] rounded-[3px] bg-[#d2cdc9]" />
      </div>
    </aside>
  );
}

const fields = [
  { name: "AIRPORT" },
  { name: "AIRPORT_ID" },
  { name: "DayofMonth", sum: true },
  { name: "DayOfWeek", sum: true },
  { name: "DepDelay15Count", sum: true },
  { name: "DepDelayCount", sum: true, on: true },
  { name: "DISPLAY_AIRPORT_N..." },
  { name: "LATITUDE" },
  { name: "LONGITUDE" },
  { name: "Month", sum: true },
  { name: "OriginAirportCode", on: true },
];

function Fields() {
  return (
    <aside aria-label="Fields" className="flex w-[212px] shrink-0 flex-col pr-[6px] pl-[5px]">
      <div className="flex h-[45px] items-start justify-between pt-2 pr-[3px] pl-1">
        <h2 className="text-[15px] leading-[22px] font-bold">Fields</h2>
        <button type="button" aria-label="Collapse fields" className="mt-[5px]"><Collapse /></button>
      </div>
      <label className="flex h-[27px] shrink-0 items-center gap-[6px] rounded-[2px] border border-[#6a6867] bg-white pl-[6px]">
        <SearchGlyph />
        <input type="search" aria-label="Search fields" placeholder="Search" className="w-full min-w-0 text-[13px] outline-none placeholder:text-[#484644]" />
      </label>
      <div className="mt-2 flex">
        <div className="min-w-0 flex-1 whitespace-nowrap">
          <div className="flex h-[25px] items-center pl-[3px]">
            <button type="button" aria-label="Toggle DelaySummary"><Down /></button>
            <svg viewBox="0 0 20 20" className="ml-[3px] h-5 w-5" fill="none" stroke="#252423" strokeWidth="1" aria-hidden="true">
              <path d="M.5 2.500h12v11H.5z" fill="#fff" />
              <path d="M.5 3.500h12M.5 6.500h12M.5 10.500h12M4.500 4v9M8.500 4v9" />
              <circle cx="13" cy="14" r="5.800" fill="#f2c811" stroke="none" />
              <path d="M10.500 14l2 1.500 3-3" strokeWidth="1.500" />
            </svg>
            <span className="flex-1 text-[13px]">DelaySummary</span>
            <button type="button" aria-label="DelaySummary options" className="mr-[3px]"><Dots /></button>
          </div>
          <ul>
            {fields.map((f) => (
              <li key={f.name}>
                <label className="flex h-6 items-center pl-[34px]">
                  <span className="grid h-3 w-3 shrink-0 place-items-center">
                    <input type="checkbox" defaultChecked={f.on} className="col-start-1 row-start-1 h-3 w-3 appearance-none rounded-[2px] border border-[#8a8886] checked:border-[#f2c811] checked:bg-[#f2c811]" />
                    {f.on && (
                      <svg viewBox="0 0 12 12" className="pointer-events-none col-start-1 row-start-1 h-3 w-3" fill="none" stroke="#252423" aria-hidden="true"><path d="M2.500 6.500L5 9l5-5" /></svg>
                    )}
                  </span>
                  <span className="ml-2 w-[18px] shrink-0">
                    {f.sum && (
                      <svg viewBox="0 0 12 14" className="h-[14px] w-3" fill="none" stroke="#3b3a39" strokeWidth="1.200" aria-hidden="true"><path d="M10.500 3V1H1.500L7 7l-5.500 6h9v-2" /></svg>
                    )}
                  </span>
                  {f.name}
                </label>
              </li>
            ))}
          </ul>
        </div>
        <div className="h-[275px] w-2 shrink-0 bg-[#c9c7ca]" />
      </div>
    </aside>
  );
}

function Arrows() {
  return (
    <svg viewBox="0 0 230 160" className="pointer-events-none absolute top-[220px] right-[137px] h-40 w-[230px] drop-shadow-[2px_4px_2px_rgba(0,0,0,0.5)]" fill="#ff4444" stroke="#ff4444" strokeWidth="6" strokeLinecap="round" aria-hidden="true">
      <path d="M207 9L94 124" />
      <path d="M184 136L25 32" />
      <path d="M81 138l6-19 13 13zM12 23l19 2-9 15z" strokeWidth="1" />
    </svg>
  );
}

export default function App() {
  return (
    <div className="flex h-screen flex-col overflow-hidden border border-black bg-[#f7f3f7] font-[Roboto,'Noto_Sans',sans-serif] text-[12px] text-[#252423]">
      <Ribbon />
      <main className="relative flex min-h-0 flex-1">
        <Rail />
        <div className="flex min-w-0 flex-1 flex-col bg-[#f0edf0]">
          <Banner />
          <div className="flex min-h-0 flex-1">
            <Canvas />
            <Filters />
          </div>
        </div>
        <Visualizations />
        <Fields />
        <Arrows />
      </main>
    </div>
  );
}
